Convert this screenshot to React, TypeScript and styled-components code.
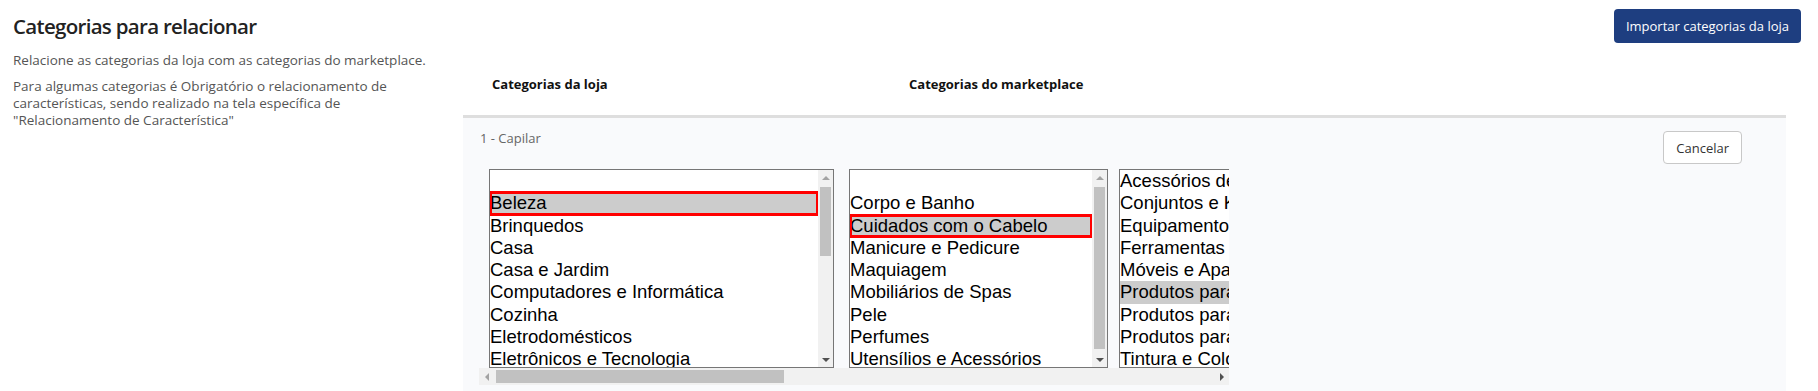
import styled, { createGlobalStyle } from 'styled-components';

const GlobalStyle = createGlobalStyle`
  * {
    box-sizing: border-box;
  }
  body {
    margin: 0;
    background: #ffffff;
    font-family: 'Open Sans', 'Noto Sans', Arial, sans-serif;
  }
`;

const Page = styled.div`
  padding: 9px 17px 0 13px;
`;

const TopBar = styled.div`
  display: flex;
  justify-content: space-between;
  align-items: flex-start;
`;

const Title = styled.h1`
  margin: 0;
  font-size: 20.5px;
  font-weight: 600;
  letter-spacing: -0.7px;
  line-height: 34px;
  color: #222222;
`;

const PrimaryButton = styled.button`
  height: 34px;
  padding: 0 12px;
  border: none;
  border-radius: 4px;
  background-color: #1e3e80;
  color: #ffffff;
  font-family: inherit;
  font-size: 13px;
  cursor: pointer;
`;

const Content = styled.div`
  display: flex;
  align-items: flex-start;
`;

const Intro = styled.div`
  width: 450px;
  padding-right: 28px;
  padding-top: 9px;
`;

const IntroText = styled.p`
  margin: 0 0 9px;
  font-size: 13.5px;
  line-height: 17px;
  color: #555555;
`;

const Mapping = styled.div`
  flex: 1;
  margin-right: 15px;
`;

const ColumnHeaders = styled.div`
  display: grid;
  grid-template-columns: 417px 1fr;
  padding: 33px 0 22px 29px;
  border-bottom: 3px solid #dedede;
`;

const ColumnHeader = styled.span`
  font-size: 13px;
  font-weight: 700;
  line-height: 17px;
  color: #111111;
`;

const GroupPanel = styled.div`
  background-color: #f9fafc;
  padding: 13px 44px 6px 17px;
`;

const GroupHeader = styled.div`
  display: flex;
  justify-content: space-between;
  align-items: flex-start;
`;

const GroupLabel = styled.span`
  font-size: 13px;
  line-height: 15px;
  color: #666666;
`;

const SecondaryButton = styled.button`
  height: 33px;
  padding: 0 12px;
  border: 1px solid #c8c8c8;
  border-radius: 4px;
  background-color: #ffffff;
  color: #333333;
  font-family: inherit;
  font-size: 13px;
  cursor: pointer;
`;

const ScrollArea = styled.div`
  width: 750px;
  margin: 5px 0 0 -1px;
  overflow: hidden;
`;

const ListRow = styled.div`
  display: flex;
  padding-left: 10px;
  width: 1900px;
`;

const ListBox = styled.div<{ $width: number; $gap: number }>`
  display: flex;
  flex-shrink: 0;
  width: ${(p) => p.$width}px;
  height: 199px;
  margin-right: ${(p) => p.$gap}px;
  border: 1px solid #767676;
  background-color: #ffffff;
`;

const Options = styled.div<{ $offset: number }>`
  flex: 1;
  overflow: hidden;
  padding-top: ${(p) => p.$offset}px;
  font-family: 'Liberation Sans', Arial, sans-serif;
  font-size: 18.5px;
  color: #000000;
`;

const Option = styled.div<{ $selected?: boolean; $flagged?: boolean }>`
  height: 22.3px;
  padding: 0 2px 0 0;
  line-height: 21.3px;
  white-space: nowrap;
  background-color: ${(p) => (p.$selected ? '#cccccc' : 'transparent')};
  outline: ${(p) => (p.$flagged ? '3px solid #ff0000' : 'none')};
  outline-offset: -2px;
`;

const VScroll = styled.div`
  display: flex;
  flex-direction: column;
  width: 15px;
  background-color: #f1f1f1;
`;

const Arrow = styled.div<{ $dir: 'up' | 'down' | 'left' | 'right' }>`
  flex-shrink: 0;
  width: 15px;
  height: ${(p) => (p.$dir === 'left' || p.$dir === 'right' ? '17px' : '15px')};
  display: flex;
  align-items: center;
  justify-content: center;

  &::before {
    content: '';
    border: 4px solid transparent;
    ${(p) => p.$dir === 'up' && 'border-bottom-color: #a3a3a3; border-top-width: 0;'}
    ${(p) => p.$dir === 'down' && 'border-top-color: #505050; border-bottom-width: 0;'}
    ${(p) => p.$dir === 'left' && 'border-right-color: #a3a3a3; border-left-width: 0;'}
    ${(p) => p.$dir === 'right' && 'border-left-color: #505050; border-right-width: 0;'}
  }
`;

const VTrack = styled.div`
  flex: 1;
  padding: 2px;
`;

const VThumb = styled.div<{ $size: number }>`
  height: ${(p) => p.$size}px;
  background-color: #c1c1c1;
`;

const HScroll = styled.div`
  display: flex;
  height: 17px;
  background-color: #f1f1f1;
`;

const HTrack = styled.div`
  flex: 1;
  padding: 2px;
`;

const HThumb = styled.div`
  width: 288px;
  height: 13px;
  background-color: #c1c1c1;
`;

type ListData = {
  items: string[];
  selected?: number;
  flagged?: boolean;
  width: number;
  gap: number;
  thumb: number;
  offset?: number;
};

const lists: ListData[] = [
  {
    items: ['', 'Beleza', 'Brinquedos', 'Casa', 'Casa e Jardim', 'Computadores e Informática', 'Cozinha', 'Eletrodomésticos', 'Eletrônicos e Tecnologia', 'Esporte e Lazer'],
    selected: 1,
    flagged: true,
    width: 345,
    gap: 15,
    thumb: 69,
  },
  {
    items: ['', 'Corpo e Banho', 'Cuidados com o Cabelo', 'Manicure e Pedicure', 'Maquiagem', 'Mobiliários de Spas', 'Pele', 'Perfumes', 'Utensílios e Acessórios'],
    selected: 2,
    flagged: true,
    width: 259,
    gap: 11,
    thumb: 162,
  },
  {
    items: ['Acessórios de Cabelo', 'Conjuntos e Kits', 'Equipamentos', 'Ferramentas para Cabelo', 'Móveis e Aparelhos', 'Produtos para Alisamento', 'Produtos para Cabelo', 'Produtos para Penteado', 'Tintura e Coloração'],
    selected: 5,
    width: 300,
    gap: 0,
    thumb: 150,
    offset: -2,
  },
];

const App: React.FC = () => {
  return (
    <>
      <GlobalStyle />
      <Page>
        <TopBar>
          <Title>Categorias para relacionar</Title>
          <PrimaryButton>Importar categorias da loja</PrimaryButton>
        </TopBar>
        <Content>
          <Intro>
            <IntroText>Relacione as categorias da loja com as categorias do marketplace.</IntroText>
            <IntroText>
              Para algumas categorias é Obrigatório o relacionamento de características, sendo realizado na tela específica de "Relacionamento de Característica"
            </IntroText>
          </Intro>
          <Mapping>
            <ColumnHeaders>
              <ColumnHeader>Categorias da loja</ColumnHeader>
              <ColumnHeader>Categorias do marketplace</ColumnHeader>
            </ColumnHeaders>
            <GroupPanel>
              <GroupHeader>
                <GroupLabel>1 - Capilar</GroupLabel>
                <SecondaryButton>Cancelar</SecondaryButton>
              </GroupHeader>
              <ScrollArea>
                <ListRow>
                  {lists.map((list, i) => (
                    <ListBox key={i} $width={list.width} $gap={list.gap}>
                      <Options $offset={list.offset ?? 0}>
                        {list.items.map((item, j) => (
                          <Option key={j} $selected={j === list.selected} $flagged={list.flagged && j === list.selected}>
                            {item}
                          </Option>
                        ))}
                      </Options>
                      <VScroll>
                        <Arrow $dir="up" />
                        <VTrack>
                          <VThumb $size={list.thumb} />
                        </VTrack>
                        <Arrow $dir="down" />
                      </VScroll>
                    </ListBox>
                  ))}
                </ListRow>
                <HScroll>
                  <Arrow $dir="left" />
                  <HTrack>
                    <HThumb />
                  </HTrack>
                  <Arrow $dir="right" />
                </HScroll>
              </ScrollArea>
            </GroupPanel>
          </Mapping>
        </Content>
      </Page>
    </>
  );
};

export default App;
